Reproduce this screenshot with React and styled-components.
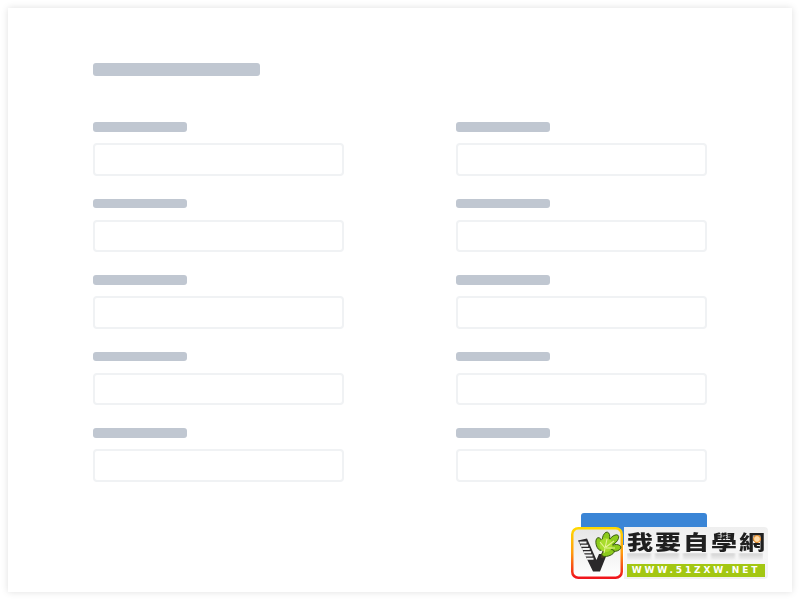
import React from "react";
import styled, { createGlobalStyle } from "styled-components";

const Global = createGlobalStyle`
  html, body { margin: 0; padding: 0; background: #fff; }
  #root { width: 800px; height: 600px; overflow: hidden; }
`;

const Stage = styled.div`
  position: relative;
  width: 800px;
  height: 600px;
  padding: 8px;
  box-sizing: border-box;
  background: #fff;
`;

const Card = styled.main`
  box-sizing: border-box;
  width: 784px;
  height: 584px;
  background: #fff;
  box-shadow: 0 0 7px rgba(0, 0, 0, 0.13);
  padding: 55px 85px 0 85px;
`;

const Title = styled.div`
  width: 167px;
  height: 12.5px;
  border-radius: 3px;
  background: #c0c7d1;
  margin-bottom: 46.5px;
`;

const Columns = styled.div`
  display: grid;
  grid-template-columns: 251px 251px;
  column-gap: 112px;
`;

const Column = styled.div`
  display: flex;
  flex-direction: column;
  gap: 23px;
`;

const Field = styled.div`
  display: flex;
  flex-direction: column;
  gap: 11.5px;
`;

const Label = styled.div`
  width: 94px;
  height: 9.5px;
  border-radius: 3px;
  background: #c0c7d1;
`;

const Input = styled.div`
  box-sizing: border-box;
  width: 251px;
  height: 32.5px;
  background: #fff;
  border: 2px solid #f0f2f4;
  border-radius: 4px;
`;

const Actions = styled.div`
  display: flex;
  justify-content: flex-end;
  margin-top: 31.5px;
`;

const Submit = styled.div`
  width: 126px;
  height: 32px;
  border-radius: 3px;
  background: #3a85d6;
`;

const Watermark = styled.div`
  position: absolute;
  left: 571px;
  top: 527px;
  width: 197px;
  height: 52px;
  display: flex;
  gap: 1px;
`;

const Badge = styled.svg`
  display: block;
  flex: none;
  width: 52px;
  height: 52px;
`;

const Brand = styled.div`
  position: relative;
  width: 144px;
  height: 52px;
  padding: 4px 0 0 3px;
  box-sizing: border-box;
  background: linear-gradient(#efefef, #f7f7f7 60%, #f1f1f1);
  border-radius: 0 4px 4px 0;
  display: flex;
  flex-direction: column;
`;

const BrandName = styled.div`
  height: 21px;
  width: 108px;
  transform: scaleX(1.3);
  transform-origin: left center;
  font-family: "Noto Sans CJK TC", "Noto Sans CJK SC", sans-serif;
  font-weight: 900;
  font-size: 20px;
  line-height: 21px;
  letter-spacing: 1.55px;
  white-space: nowrap;
  color: #1f1f1f;
`;

const Reflection = styled.div`
  width: 136px;
  height: 8px;
  margin-top: 1px;
  background: repeating-linear-gradient(
    90deg,
    #cfcfcf 0 24px,
    transparent 24px 28px
  );
  mask-image: linear-gradient(#000, transparent);
  filter: blur(1px);
`;

const Seal = styled.span`
  position: absolute;
  left: 129px;
  top: 8px;
  width: 6px;
  height: 6px;
  border: 1.5px solid #f08a1c;
  border-radius: 50%;
  background: #fbd9a8;
`;

const BrandUrl = styled.div`
  width: 138px;
  height: 13px;
  margin-top: 3px;
  background: #a3c712;
  color: #fff;
  font-family: "DejaVu Sans", sans-serif;
  font-weight: 700;
  font-size: 9px;
  line-height: 13px;
  letter-spacing: 2.9px;
  text-align: center;
  white-space: nowrap;
`;

const rows = [0, 1, 2, 3, 4];

const FormColumn = () => (
  <Column>
    {rows.map((r) => (
      <Field key={r}>
        <Label />
        <Input />
      </Field>
    ))}
  </Column>
);

export default function App() {
  return (
    <>
      <Global />
      <Stage>
        <Card>
          <Title />
          <Columns>
            <FormColumn />
            <FormColumn />
          </Columns>
          <Actions>
            <Submit />
          </Actions>
        </Card>
        <Watermark>
          <Badge viewBox="0 0 52 52">
            <defs>
              <linearGradient id="rim" x1="0" y1="0" x2="0" y2="1">
                <stop offset="0" stopColor="#ffd800" />
                <stop offset="0.5" stopColor="#ff9a10" />
                <stop offset="1" stopColor="#f0141c" />
              </linearGradient>
              <linearGradient id="fill" x1="0" y1="0" x2="0" y2="1">
                <stop offset="0" stopColor="#e6e6e6" />
                <stop offset="0.55" stopColor="#f4f4f4" />
                <stop offset="1" stopColor="#ffffff" />
              </linearGradient>
            </defs>
            <rect x="1.25" y="1.25" width="49.5" height="49.500" rx="6" fill="url(#fill)" stroke="url(#rim)" strokeWidth="2.5" />
            <path d="M7 13.500 L16 11.500 L25.500 33 L28 27 L36 27 L29 44.500 L22 44.500 Z" fill="#2a282a" />
            <path d="M8.500 15.500h7M9.800 18.800h7.400M11.200 22h7.500M12.600 25.300h7.500M14 28.500h7.500M15.500 31.800h7" stroke="#f2f2f2" strokeWidth="2.100" />
            <path d="M31 31 L33 24" stroke="#4a3c24" strokeWidth="3" />
            <g fill="#8ccb1c" stroke="#37580f" strokeWidth="0.9">
              <ellipse cx="28.500" cy="17" rx="3.400" ry="6.500" transform="rotate(-14 28.500 17)" />
              <ellipse cx="35" cy="11.500" rx="3.600" ry="6.500" transform="rotate(12 35 11.500)" />
              <ellipse cx="42.500" cy="13" rx="3.400" ry="6.500" transform="rotate(45 42.500 13)" />
              <ellipse cx="44" cy="21" rx="3.400" ry="6" transform="rotate(80 44 21)" />
              <ellipse cx="37" cy="26" rx="3" ry="6.500" transform="rotate(72 37 26)" />
            </g>
            <ellipse cx="35" cy="18" rx="6.500" ry="7" fill="#a8dc2c" />
            <path d="M33 26 L36 12 M35 20 L43 14 M35 21 L44 21 M34 21 L29 15" stroke="#e6f496" strokeWidth="1.100" fill="none" />
          </Badge>
          <Brand>
            <BrandName>我要自學網</BrandName>
            <Reflection />
            <Seal />
            <BrandUrl>WWW.51ZXW.NET</BrandUrl>
          </Brand>
        </Watermark>
      </Stage>
    </>
  );
}
